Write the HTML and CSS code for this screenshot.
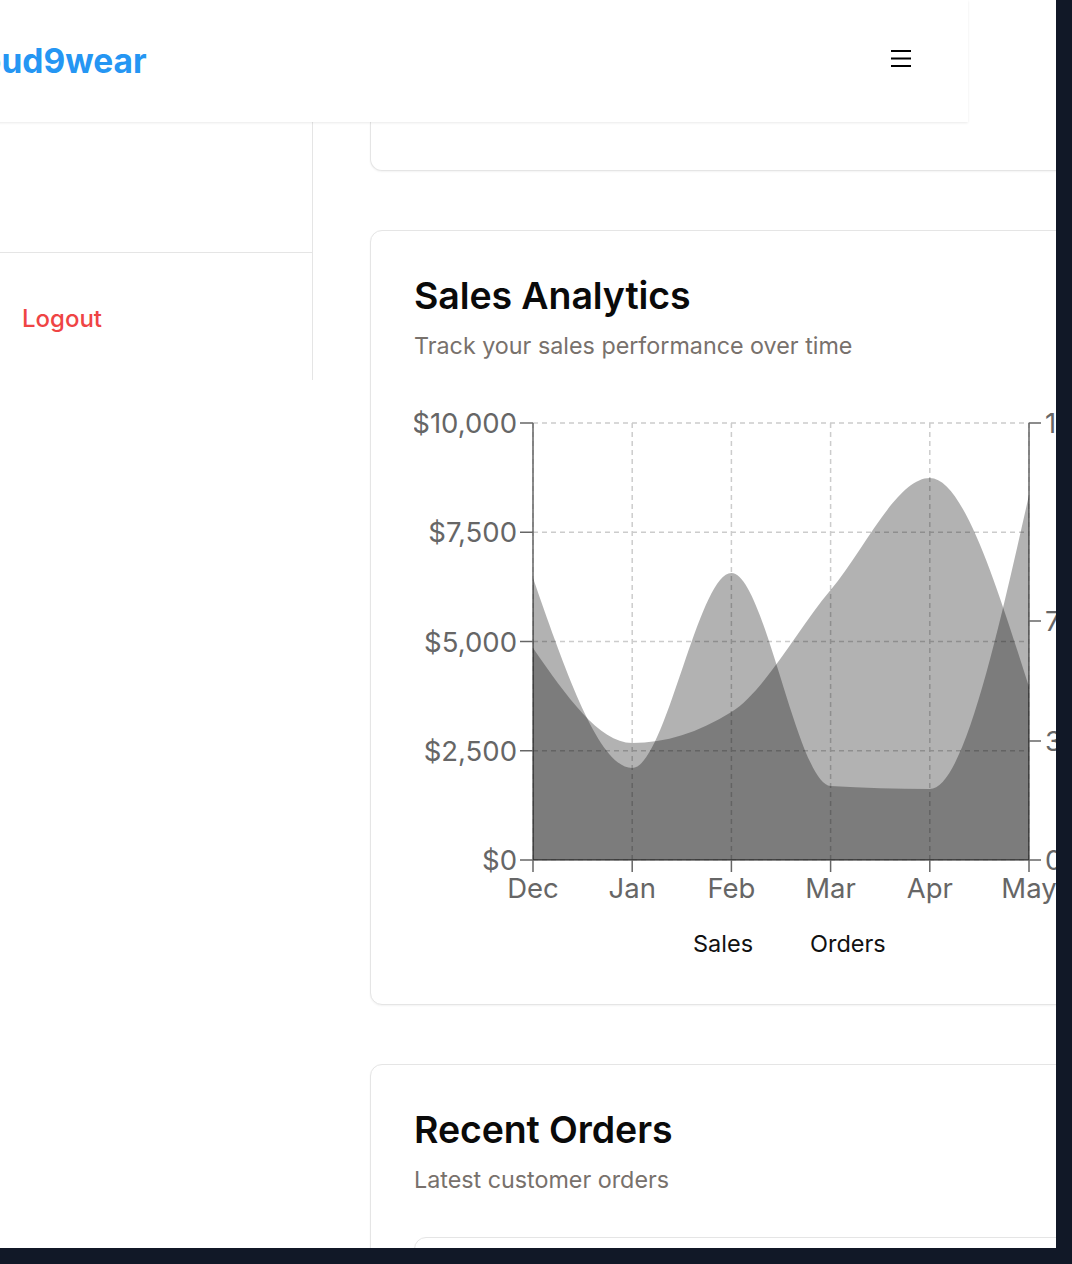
FILE: index.html
```html
<!DOCTYPE html>
<html lang="en">
<head>
<meta charset="utf-8">
<title>Cloud9wear Dashboard</title>
<link rel="stylesheet" href="styles.css">
</head>
<body>
<div class="viewport">
  <div class="page">
    <header class="topbar">
      <span class="logo">Cloud9wear</span>
      <button class="menu-btn" aria-label="Open menu">
        <svg width="22" height="19" viewBox="0 0 22 19"><path d="M1 2H21M1 9.5H21M1 17H21" stroke="#000" stroke-width="2.2" fill="none"/></svg>
      </button>
    </header>
    <div class="layout">
      <aside class="sidebar">
        <div class="nav"></div>
        <div class="sidebar-foot"><a class="logout">Logout</a></div>
      </aside>
      <main class="main">
        <section class="card card-cut"></section>

        <section class="card">
          <h2 class="card-title">Sales Analytics</h2>
          <p class="card-sub">Track your sales performance over time</p>
          <div class="chart">
            <svg class="chart-svg" width="660" height="590" viewBox="0 0 660 590">
              <g transform="translate(-1,0)">
                <g class="grid">
                  <line x1="120" y1="33" x2="616" y2="33"/>
                  <line x1="120" y1="142.25" x2="616" y2="142.25"/>
                  <line x1="120" y1="251.5" x2="616" y2="251.5"/>
                  <line x1="120" y1="360.75" x2="616" y2="360.75"/>
                  <line x1="120" y1="470" x2="616" y2="470"/>
                  <line x1="120" y1="33" x2="120" y2="470"/>
                  <line x1="219.2" y1="33" x2="219.2" y2="470"/>
                  <line x1="318.4" y1="33" x2="318.4" y2="470"/>
                  <line x1="417.6" y1="33" x2="417.6" y2="470"/>
                  <line x1="516.8" y1="33" x2="516.8" y2="470"/>
                  <line x1="616" y1="33" x2="616" y2="470"/>
                </g>
                <g class="axis">
                  <line x1="120" y1="33" x2="120" y2="470"/>
                  <line x1="107" y1="33" x2="120" y2="33"/>
                  <line x1="107" y1="142.25" x2="120" y2="142.25"/>
                  <line x1="107" y1="251.5" x2="120" y2="251.5"/>
                  <line x1="107" y1="360.75" x2="120" y2="360.75"/>
                  <line x1="107" y1="470" x2="120" y2="470"/>
                  <line x1="120" y1="470" x2="616" y2="470"/>
                  <line x1="120" y1="470" x2="120" y2="482"/>
                  <line x1="219.2" y1="470" x2="219.2" y2="482"/>
                  <line x1="318.4" y1="470" x2="318.4" y2="482"/>
                  <line x1="417.6" y1="470" x2="417.6" y2="482"/>
                  <line x1="516.8" y1="470" x2="516.8" y2="482"/>
                  <line x1="616" y1="470" x2="616" y2="482"/>
                  <line x1="616" y1="33" x2="616" y2="470"/>
                  <line x1="616" y1="33" x2="628" y2="33"/>
                  <line x1="616" y1="231" x2="628" y2="231"/>
                  <line x1="616" y1="351" x2="628" y2="351"/>
                  <line x1="616" y1="470" x2="628" y2="470"/>
                </g>
                <path class="area" d="M120,188 C153.07,283 186.13,378 219.2,378 C252.27,378 285.33,183 318.4,183 C351.47,183 384.53,394 417.6,396 C450.67,398 483.73,399 516.8,399 C549.87,399 582.93,252 616,105 L616,470 L120,470 Z"/>
                <path class="area" d="M120,258 C153.07,305.5 186.13,353 219.2,353 C252.27,353 285.33,342.67 318.4,322 C351.47,301.33 384.53,239 417.6,200 C450.67,161 483.73,88 516.8,88 C549.87,88 582.93,192.5 616,297 L616,470 L120,470 Z"/>
                <g class="tick-y">
                  <text x="104" y="43">$10,000</text>
                  <text x="104" y="152">$7,500</text>
                  <text x="104" y="261.5">$5,000</text>
                  <text x="104" y="370.5">$2,500</text>
                  <text x="104" y="480">$0</text>
                </g>
                <g class="tick-x">
                  <text x="120" y="508">Dec</text>
                  <text x="219.2" y="508">Jan</text>
                  <text x="318.4" y="508">Feb</text>
                  <text x="417.6" y="508">Mar</text>
                  <text x="516.8" y="508">Apr</text>
                  <text x="616" y="508">May</text>
                </g>
                <g class="tick-r">
                  <text x="632" y="43">130</text>
                  <text x="632" y="241">72</text>
                  <text x="632" y="361">36</text>
                  <text x="632" y="480">0</text>
                </g>
                <g class="legend">
                  <text x="280" y="562">Sales</text>
                  <text x="397" y="562">Orders</text>
                </g>
              </g>
            </svg>
          </div>
        </section>

        <section class="card">
          <h2 class="card-title">Recent Orders</h2>
          <p class="card-sub">Latest customer orders</p>
          <div class="table-box"></div>
        </section>
      </main>
    </div>
  </div>
</div>
</body>
</html>
```

FILE: styles.css
```css
html {
  background: #111827;
}

body {
  margin: 0;
  font-family: Inter, "Noto Sans", "Liberation Sans", sans-serif;
  color: #0a0a0a;
}

.viewport {
  width: 1056px;
  height: 1248px;
  overflow: hidden;
  background: #fff;
}

.page {
  margin-left: -60px;
  width: 1400px;
}

.topbar {
  position: relative;
  z-index: 2;
  box-sizing: border-box;
  width: 1028px;
  height: 122px;
  padding: 0 56px 0 7px;
  display: flex;
  align-items: center;
  justify-content: space-between;
  background: #fff;
  box-shadow: 0 1px 3px rgba(0, 0, 0, 0.06), 0 1px 2px rgba(0, 0, 0, 0.03);
}

.logo {
  font-size: 33.5px;
  line-height: 40px;
  font-weight: 700;
  color: #2596f3;
}

.menu-btn {
  display: flex;
  padding: 0 0 5px;
  border: 0;
  background: none;
}

.layout {
  display: flex;
  align-items: flex-start;
}

.sidebar {
  flex: none;
  box-sizing: border-box;
  width: 373px;
  background: #fff;
  border-right: 1px solid #e5e5e5;
}

.nav {
  height: 130px;
  border-bottom: 1px solid #e5e5e5;
}

.sidebar-foot {
  padding: 48px 0 43px 82px;
}

.logout {
  display: block;
  font-size: 24px;
  line-height: 36px;
  font-weight: 500;
  color: #ef4444;
}

.main {
  flex: none;
  padding-left: 57px;
}

.card {
  box-sizing: border-box;
  width: 860px;
  padding: 45px 43px 24px;
  background: #fff;
  border: 1px solid #e5e5e5;
  border-radius: 12px;
  box-shadow: 0 1px 2px rgba(0, 0, 0, 0.05);
}

.card + .card {
  margin-top: 59px;
}

.card-cut {
  height: 49px;
  padding: 0;
  border-top: 0;
  border-radius: 0 0 12px 12px;
}

.card-title {
  margin: 0;
  font-size: 37.5px;
  line-height: 40px;
  font-weight: 600;
  letter-spacing: -0.1px;
  color: #0a0a0a;
}

.card-sub {
  margin: 13px 0 0;
  font-size: 23.3px;
  line-height: 34px;
  color: #78716c;
}

.chart {
  margin-top: 27px;
}

.chart-svg {
  display: block;
  overflow: hidden;
}

.grid line {
  stroke: #cccccc;
  stroke-width: 1.5;
  stroke-dasharray: 5 4;
}

.axis line {
  stroke: #666666;
  stroke-width: 1.5;
}

.area {
  fill: #000;
  fill-opacity: 0.3;
}

.tick-y text,
.tick-x text,
.tick-r text {
  fill: #666666;
  font-size: 27.5px;
  font-family: Inter, "Noto Sans", sans-serif;
}

.tick-y text {
  text-anchor: end;
}

.tick-x text {
  text-anchor: middle;
}

.legend text {
  fill: #111111;
  font-size: 23.5px;
  font-family: Inter, "Noto Sans", sans-serif;
}

.table-box {
  height: 200px;
  margin-top: 40px;
  border: 1px solid #e5e5e5;
  border-radius: 12px;
}
```
